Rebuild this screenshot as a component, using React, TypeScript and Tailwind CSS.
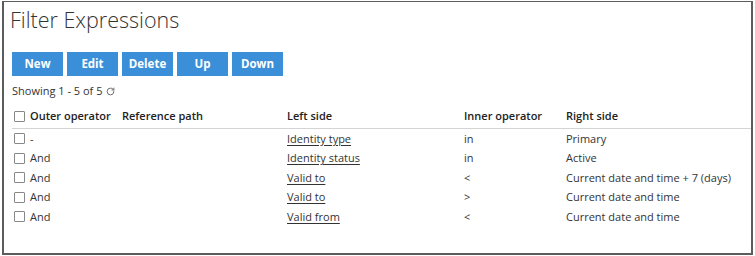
import React from "react";
import { RotateCw } from "lucide-react";

const rows = [
  { outer: "-", left: "Identity type", inner: "in", right: "Primary" },
  { outer: "And", left: "Identity status", inner: "in", right: "Active" },
  { outer: "And", left: "Valid to", inner: "<", right: "Current date and time + 7 (days)" },
  { outer: "And", left: "Valid to", inner: ">", right: "Current date and time" },
  { outer: "And", left: "Valid from", inner: "<", right: "Current date and time" },
];

const buttons = ["New", "Edit", "Delete", "Up", "Down"];

const Box = () => (
  <span className="inline-block w-[11px] h-[11px] border border-[#888] rounded-[1px] bg-white shrink-0" />
);

const App = () => {
  return (
    <div className="w-[755px] h-[256px] bg-white pt-[1px] pl-[2px] font-['Open_Sans',sans-serif] text-[11px] text-[#333]">
      <div className="w-[751px] h-[254px] border-t border-l-2 border-r-2 border-b-2 border-[#5c5c5c] pl-[8px]">
        <h1 className="-ml-[2px] mt-[4px] h-[28px] leading-[28px] text-[21.5px] font-light text-[#333]">
          Filter Expressions
        </h1>
        <div className="flex gap-[4px] mt-[18px]">
          {buttons.map((b) => (
            <button
              key={b}
              className="w-[51px] h-[24px] bg-[#3b8fd8] text-white font-bold text-[11.5px] flex items-center justify-center"
            >
              {b}
            </button>
          ))}
        </div>
        <div className="mt-[7px] h-[16px] flex items-center gap-[4px]">
          <span>Showing 1 - 5 of 5</span>
          <RotateCw size={9} strokeWidth={2.5} className="text-[#666]" />
        </div>
        <div className="mt-[7px]">
          <div className="flex items-center h-[23px] pb-[2px] border-b border-[#d4d4d4] font-semibold text-[#222]">
            <div className="w-[110px] flex items-center gap-[5px] pl-[2px]">
              <Box />
              <span>Outer operator</span>
            </div>
            <div className="w-[165px]">Reference path</div>
            <div className="w-[177px]">Left side</div>
            <div className="w-[102px]">Inner operator</div>
            <div>Right side</div>
          </div>
          {rows.map((r, i) => (
            <div key={i} className="flex items-center h-[19.5px]">
              <div className="w-[110px] flex items-center gap-[5px] pl-[2px]">
                <Box />
                <span>{r.outer}</span>
              </div>
              <div className="w-[165px]"></div>
              <div className="w-[177px]">
                <span className="underline underline-offset-2">{r.left}</span>
              </div>
              <div className="w-[102px]">{r.inner}</div>
              <div>{r.right}</div>
            </div>
          ))}
        </div>
      </div>
    </div>
  );
};

export default App;
